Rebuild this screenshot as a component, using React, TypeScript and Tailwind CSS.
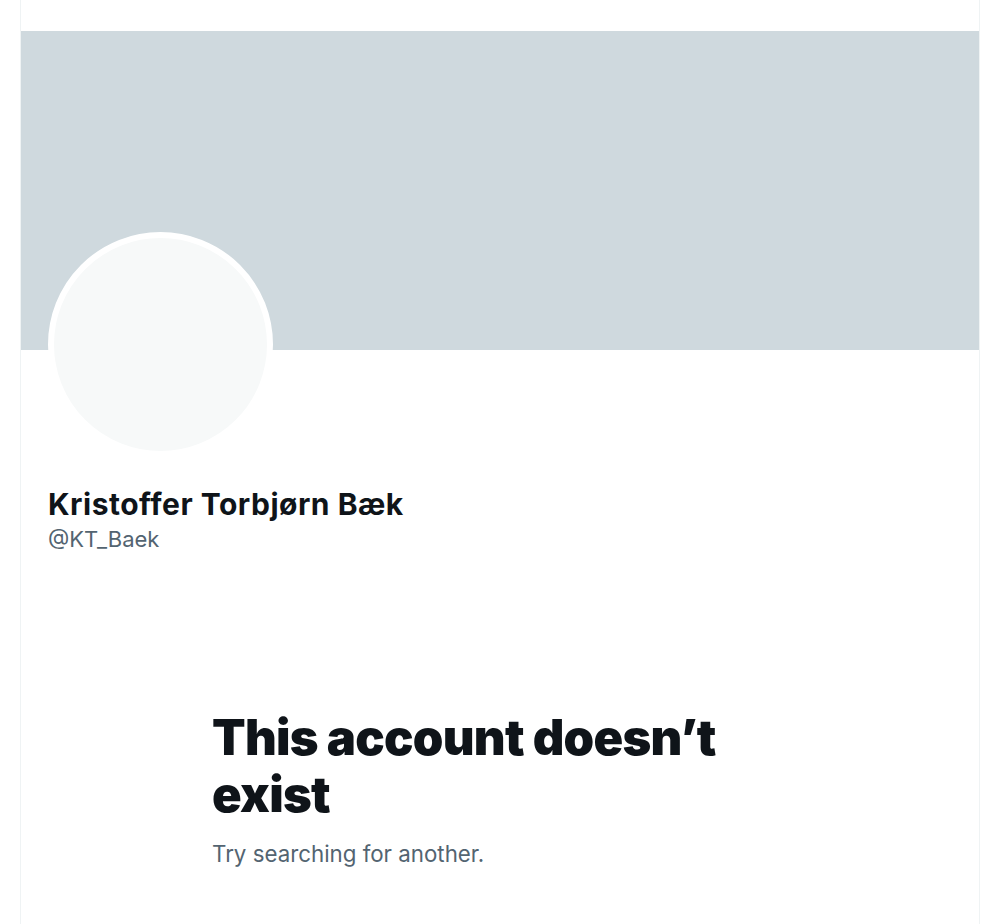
import React from "react";

export default function App() {
  return (
    <div
      className="min-h-[924px] bg-white"
      style={{ fontFamily: "Inter, 'Liberation Sans', sans-serif" }}
    >
      <div className="ml-[20px] w-[960px] min-h-[924px] border-x border-[#eff3f4]">
        <div className="h-[31px]" />
        <div className="h-[319px] bg-[#cfd9de]" />
        <div className="ml-[27px] -mt-[118px] h-[225px] w-[225px] rounded-full border-[6px] border-white bg-[#f7f9f9]" />
        <div className="mt-[29px] ml-[27px]">
          <div className="text-[30px] leading-[36px] font-bold text-[#0f1419] tracking-[0.5px]">
            Kristoffer Torbjørn Bæk
          </div>
          <div className="mt-[3px] text-[22px] leading-[28px] text-[#536471]">@KT_Baek</div>
        </div>
        <div className="mt-[156px] ml-[191px] w-[580px]">
          <h1 className="text-[49px] leading-[57px] font-black text-[#0f1419] tracking-[-0.75px]">
            This account doesn’t exist
          </h1>
          <p className="mt-[17px] text-[22.3px] leading-[28px] text-[#536471]">
            Try searching for another.
          </p>
        </div>
      </div>
    </div>
  );
}
